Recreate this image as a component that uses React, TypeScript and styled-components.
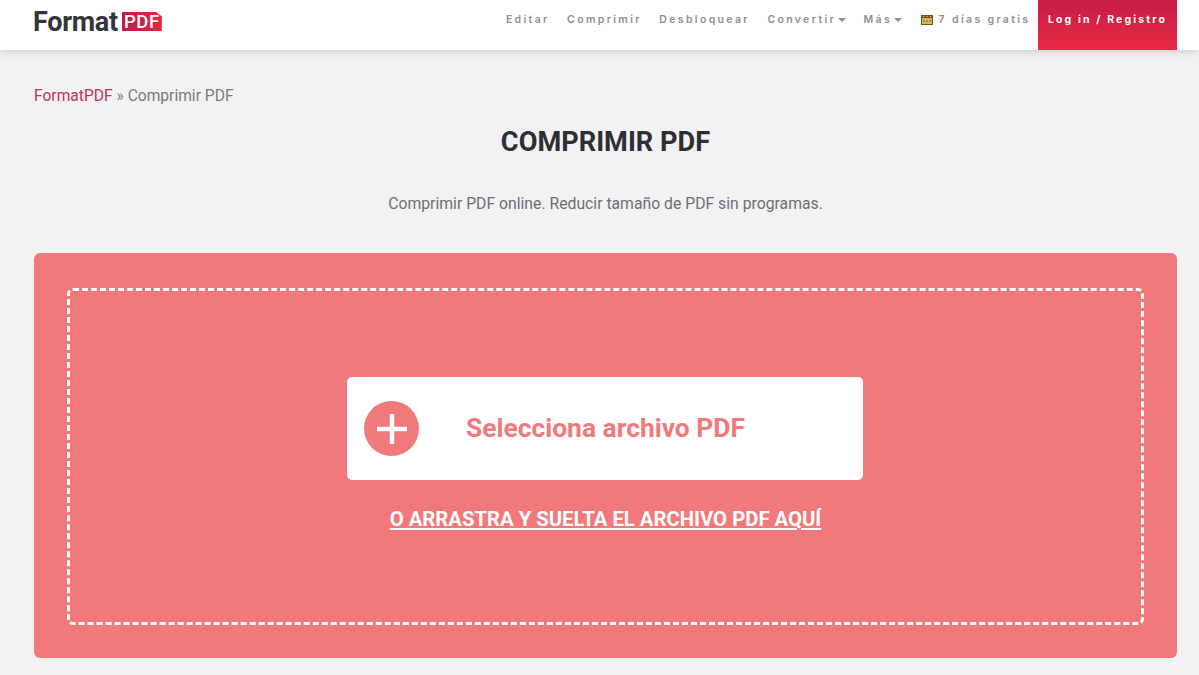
import React from "react";
import styled, { createGlobalStyle } from "styled-components";

const Global = createGlobalStyle`
  html, body { margin: 0; padding: 0; background: #f2f2f5; }
  body { font-family: Roboto, "Liberation Sans", sans-serif; overflow: hidden; }
`;

const Page = styled.div`
  width: 1199px;
  height: 675px;
  overflow: hidden;
  display: flex;
  flex-direction: column;
`;

const Header = styled.header`
  height: 50px;
  flex: none;
  background: #fff;
  box-shadow: 0 1px 8px rgba(0, 0, 0, 0.18);
  display: flex;
  align-items: flex-start;
  justify-content: space-between;
  padding: 0 22px 0 33px;
  position: relative;
`;

const Logo = styled.a`
  display: flex;
  align-items: center;
  gap: 4px;
  height: 43px;
`;

const LogoWord = styled.span`
  margin-top: 2px;
  font: 700 27px/1 Roboto, sans-serif;
  color: #34353b;
  letter-spacing: -0.3px;
`;

const LogoBadge = styled.span`
  width: 40px;
  height: 19px;
  background: linear-gradient(90deg, #c2184a 0%, #e8273f 100%);
  color: #fff;
  font: 500 18.5px/20px Roboto, sans-serif;
  text-align: center;
  letter-spacing: 0.5px;
  clip-path: polygon(0 0, 85% 0, 100% 22%, 100% 100%, 0 100%);
`;

const Nav = styled.nav`
  display: flex;
  align-items: flex-start;
`;

const NavItem = styled.a<{ $after?: number }>`
  display: flex;
  align-items: center;
  height: 40px;
  margin-right: ${(p) => p.$after ?? 17.5}px;
  font: 600 10.5px/1 Inter, sans-serif;
  letter-spacing: 2.35px;
  color: #909090;
  white-space: nowrap;
`;

const Caret = styled.span`
  width: 0;
  height: 0;
  margin-left: 2px;
  border-left: 4.5px solid transparent;
  border-right: 4.5px solid transparent;
  border-top: 4.5px solid #8e8e8e;
`;

const LoginButton = styled.a`
  height: 50px;
  width: 139px;
  box-sizing: border-box;
  padding-top: 14px;
  text-align: center;
  background: linear-gradient(180deg, #c51c46 0%, #ea2a45 100%);
  color: #fff;
  font: 700 10.5px/11px Inter, sans-serif;
  letter-spacing: 2.15px;
  white-space: nowrap;
`;

const Main = styled.main`
  flex: 1;
  padding: 0 22px 0 34px;
`;

const Breadcrumb = styled.div`
  margin-top: 37px;
  font-size: 15.6px;
  line-height: 18px;
  color: #7a7a7f;
`;

const Crumb = styled.a`
  color: #c6305a;
`;

const Title = styled.h1`
  margin: 21px 0 0;
  text-align: center;
  font: 700 27.2px/32px Roboto, sans-serif;
  color: #2f2f33;
`;

const Subtitle = styled.p`
  margin: 36px 0 0;
  text-align: center;
  font-size: 15.75px;
  line-height: 19px;
  color: #6e6e72;
`;

const DropCard = styled.section`
  margin-top: 40px;
  height: 405px;
  box-sizing: border-box;
  padding: 35px 33px 33px;
  background: #f2797b;
  border-radius: 6px;
`;

const DashedArea = styled.div`
  height: 100%;
  box-sizing: border-box;
  border: 3px dashed #fff;
  border-radius: 6px;
  display: flex;
  flex-direction: column;
  align-items: center;
  padding-top: 86px;
`;

const SelectButton = styled.button`
  width: 516px;
  height: 103px;
  flex: none;
  margin-right: 1px;
  border: 0;
  border-radius: 5px;
  background: #fff;
  padding: 0 0 0 17px;
  display: flex;
  align-items: center;
  cursor: pointer;
`;

const PlusCircle = styled.span`
  width: 55px;
  height: 55px;
  flex: none;
  border-radius: 50%;
  background: #f2797b;
  display: flex;
  align-items: center;
  justify-content: center;
`;

const SelectLabel = styled.span`
  margin: 0 0 2px 47px;
  font: 700 26.4px/32px Roboto, sans-serif;
  color: #f2797b;
  white-space: nowrap;
`;

const DragHint = styled.a`
  margin-top: 27px;
  font: 700 20.3px/24px Roboto, sans-serif;
  color: #fff;
  text-decoration: underline;
  white-space: nowrap;
`;

const TrialIcon = styled.svg`
  margin-right: 6px;
  flex: none;
`;

export default function App() {
  return (
    <Page>
      <Global />
      <Header>
        <Logo>
          <LogoWord>Format</LogoWord>
          <LogoBadge>PDF</LogoBadge>
        </Logo>
        <Nav>
          <NavItem>Editar</NavItem>
          <NavItem>Comprimir</NavItem>
          <NavItem>Desbloquear</NavItem>
          <NavItem>
            Convertir
            <Caret />
          </NavItem>
          <NavItem $after={18.5}>
            Más
            <Caret />
          </NavItem>
          <NavItem $after={7.5}>
            <TrialIcon width="12" height="10" viewBox="0 0 12 10">
              <rect x="0" y="0" width="12" height="10" fill="#6b5220" />
              <rect x="1" y="3" width="10" height="6" fill="#e8b53c" />
              <path d="M2 1h1v1H2zM5.5 1h1v1h-1zM9 1h1v1H9z" fill="#f3d77a" />
              <path d="M2 5h2v2H2zM5 5h2v2H5zM8 5h2v2H8z" fill="#7d9a7a" />
            </TrialIcon>
            7 días gratis
          </NavItem>
          <LoginButton>Log in / Registro</LoginButton>
        </Nav>
      </Header>
      <Main>
        <Breadcrumb>
          <Crumb>FormatPDF</Crumb> » Comprimir PDF
        </Breadcrumb>
        <Title>COMPRIMIR PDF</Title>
        <Subtitle>Comprimir PDF online. Reducir tamaño de PDF sin programas.</Subtitle>
        <DropCard>
          <DashedArea>
            <SelectButton>
              <PlusCircle>
                <svg width="32" height="32" viewBox="0 0 32 32">
                  <path d="M16 1v30M1 16h30" stroke="#fff" strokeWidth="4.5" fill="none" />
                </svg>
              </PlusCircle>
              <SelectLabel>Selecciona archivo PDF</SelectLabel>
            </SelectButton>
            <DragHint>O ARRASTRA Y SUELTA EL ARCHIVO PDF AQUÍ</DragHint>
          </DashedArea>
        </DropCard>
      </Main>
    </Page>
  );
}
